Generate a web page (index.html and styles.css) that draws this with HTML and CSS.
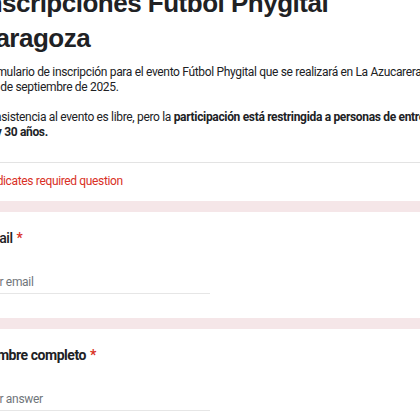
FILE: index.html
```html
<!DOCTYPE html>
<html lang="es">

<head>
    <meta charset="utf-8">
    <meta name="viewport" content="width=device-width, initial-scale=1.0">
    <title>Inscripciones Fútbol Phygital Zaragoza</title>
    <link rel="stylesheet" href="styles.css">
</head>

<body>
    <main class="form">

        <section class="card card-header">
            <div class="header-main">
                <h1 class="form-title">Inscripciones Fútbol Phygital Zaragoza</h1>
                <div class="form-desc">
                    Formulario de inscripción para el evento Fútbol Phygital que se realizará en La Azucarera<br>
                    el 6 de septiembre de 2025.<br>
                    <br>
                    La asistencia al evento es libre, pero la <b>participación está restringida a personas de entre<br>
                    16 y 30 años.</b>
                </div>
            </div>
            <div class="required-note">* Indicates required question</div>
        </section>

        <section class="card question">
            <label class="question-label label-email" for="email">Email <span class="req">*</span></label>
            <input class="answer" id="email" type="email" placeholder="Your email">
        </section>

        <section class="card question">
            <label class="question-label" for="nombre">Nombre completo <span class="req">*</span></label>
            <input class="answer" id="nombre" type="text" placeholder="Your answer">
        </section>

    </main>
</body>

</html>
```

FILE: styles.css
```css
* {
    box-sizing: border-box;
}

body {
    margin: 0;
    overflow: hidden;
    background-color: #f5e6e8;
    font-family: Roboto, 'Liberation Sans', sans-serif;
    color: #202124;
}

/* the form is wider than the window, only its middle part shows */
.form {
    width: 508px;
    margin: -38px 0 0 -44px;
    display: flex;
    flex-direction: column;
    gap: 11px;
}

.card {
    background-color: #fff;
}

.header-main {
    padding: 24px 24px 22px 24px;
}

.form-title {
    margin: 0;
    max-width: 400px;
    font-family: 'Liberation Sans', Arial, sans-serif;
    font-size: 26px;
    line-height: 35px;
    font-weight: 700;
    letter-spacing: -0.5px;
}

.form-desc {
    margin-top: 9px;
    font-size: 12px;
    line-height: 15px;
    letter-spacing: -0.33px;
    white-space: nowrap;
}

.form-desc b {
    font-weight: 700;
}

.required-note {
    border-top: 1px solid #e3e3e3;
    padding: 9px 24px 11px 24px;
    font-size: 12px;
    line-height: 18px;
    letter-spacing: -0.35px;
    color: #d93025;
}

.question {
    display: flex;
    flex-direction: column;
    align-items: flex-start;
    padding: 14px 24px 24px 24px;
}

.question-label {
    font-size: 14px;
    line-height: 24px;
    font-weight: 700;
    letter-spacing: -0.45px;
}

.label-email {
    font-weight: 500;
}

.req {
    color: #d93025;
    margin-left: 1px;
}

.answer {
    margin-top: 23px;
    width: 50%;
    height: 21px;
    padding: 0 0 2px 0;
    border: none;
    border-bottom: 1px solid #e6e6e6;
    font-family: Roboto, sans-serif;
    font-size: 12px;
    line-height: 18px;
    letter-spacing: -0.3px;
    color: #202124;
    background: none;
}

.answer::placeholder {
    color: #70757a;
}

.answer:focus {
    outline: 0;
}
```
